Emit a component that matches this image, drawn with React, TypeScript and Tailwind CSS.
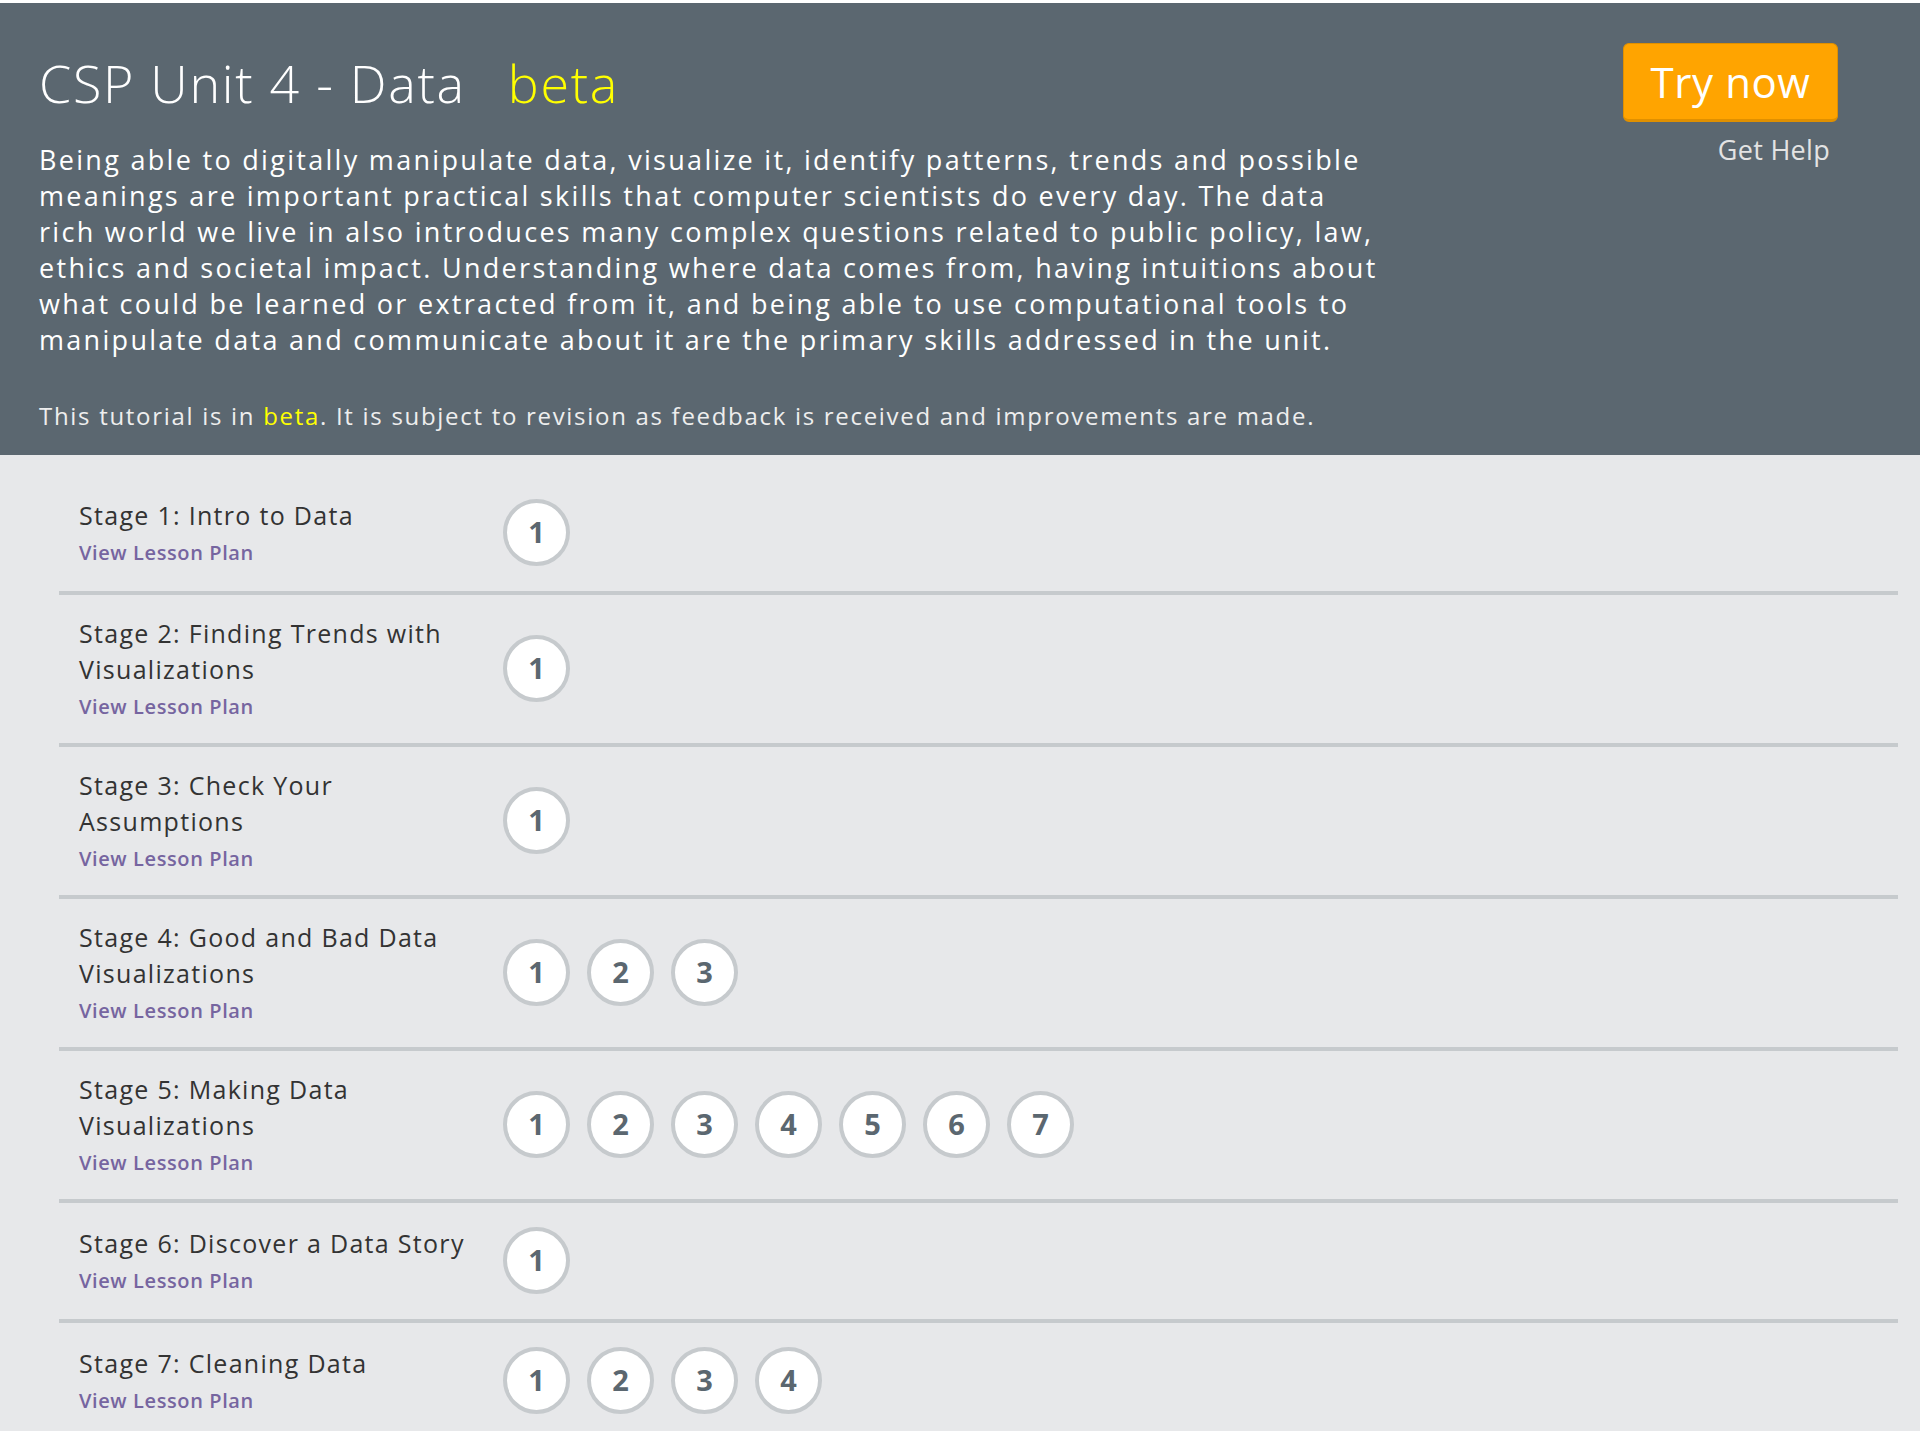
import React from 'react'

const stages = [
  { title: 'Stage 1: Intro to Data', levels: 1 },
  { title: 'Stage 2: Finding Trends with Visualizations', levels: 1 },
  { title: 'Stage 3: Check Your Assumptions', levels: 1 },
  { title: 'Stage 4: Good and Bad Data Visualizations', levels: 3 },
  { title: 'Stage 5: Making Data Visualizations', levels: 7 },
  { title: 'Stage 6: Discover a Data Story', levels: 1 },
  { title: 'Stage 7: Cleaning Data', levels: 4 },
]

const description = [
  'Being able to digitally manipulate data, visualize it, identify patterns, trends and possible',
  'meanings are important practical skills that computer scientists do every day. The data',
  'rich world we live in also introduces many complex questions related to public policy, law,',
  'ethics and societal impact. Understanding where data comes from, having intuitions about',
  'what could be learned or extracted from it, and being able to use computational tools to',
  'manipulate data and communicate about it are the primary skills addressed in the unit.',
]

export default function App() {
  return (
    <div className="min-h-screen border-t-[3px] border-white bg-[#e7e8ea] font-['Open_Sans',sans-serif]">
      {/* header */}
      <div className="flex items-start justify-between bg-[#5b6770] pl-[39px] pr-[82px] pt-[40px] pb-[21px]">
        <div className="mt-[8px]">
          <h1 className="whitespace-nowrap text-[52px] font-light leading-[64px] tracking-[1.7px] text-white">
            CSP Unit 4 - Data
            <span className="ml-[42px] text-[#ffff00]">beta</span>
          </h1>
          <p className="mt-[27px] whitespace-nowrap text-[27px] leading-[36px] tracking-[2.3px] text-white">
            {description.map((line, i) => (
              <React.Fragment key={i}>
                {line}
                {i < description.length - 1 && <br />}
              </React.Fragment>
            ))}
          </p>
          <p className="mt-[40px] whitespace-nowrap text-[24px] leading-[36px] tracking-[1.7px] text-[#eeeeee]">
            This tutorial is in <span className="text-[#ffff00]">beta</span>. It is subject to revision as feedback is received and improvements are made.
          </p>
        </div>
        <div className="flex flex-col items-end">
          <button className="flex h-[79px] w-[215px] items-center justify-center rounded-[6px] border border-b-[3px] border-[#e09000] bg-[#ffa400] text-[42px] leading-none tracking-[0.6px] text-white">
            Try now
          </button>
          <a className="mr-[8px] mt-[12px] text-[27px] leading-[32px] tracking-[0.3px] text-[#e3e3e3]">Get Help</a>
        </div>
      </div>

      {/* stages */}
      <div className="pl-[59px] pr-[22px] pt-[20px]">
        {stages.map((s) => (
          <div key={s.title} className="flex items-center border-b-4 border-[#c6cacd] pb-[22px] pl-[20px] pt-[20px]">
            <div className="w-[424px] shrink-0 pr-[8px]">
              <div className="text-[25px] leading-[36px] tracking-[1.3px] text-[#333333]">{s.title}</div>
              <a className="mt-[6px] block text-[20px] font-semibold leading-[28px] tracking-[0.6px] text-[#7665a0]">View Lesson Plan</a>
            </div>
            <div className="flex min-h-[74px] items-center gap-[17px]">
              {Array.from({ length: s.levels }, (_, i) => (
                <div
                  key={i}
                  className="flex h-[67px] w-[67px] items-center justify-center rounded-full border-4 border-[#c6cacd] bg-white text-[29px] font-bold text-[#5b6770]"
                >
                  {i + 1}
                </div>
              ))}
            </div>
          </div>
        ))}
      </div>
    </div>
  )
}
